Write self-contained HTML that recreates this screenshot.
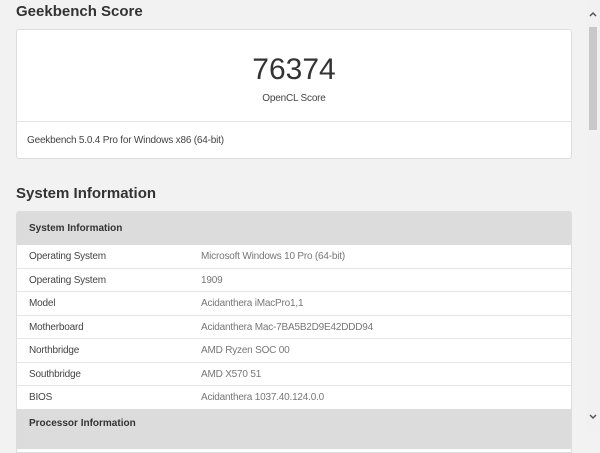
<!DOCTYPE html><html><head><style>
body{margin:0;width:600px;height:432px;overflow:hidden;background:#f2f2f2;font-family:"Liberation Sans",sans-serif;position:relative;color:#333}
.a{position:absolute}
h2{position:absolute;margin:0;font-size:15px;font-weight:bold;color:#333}
.card{position:absolute;left:16px;width:554px;background:#fff;border:1px solid #ddd;border-radius:3px}
.row{position:absolute;left:0;width:554px;height:23px;border-top:1px solid #e6e6e6;font-size:10px;line-height:23px;letter-spacing:-0.2px}
.row span{position:absolute;left:12px;color:#444}
.row b{position:absolute;left:184px;font-weight:normal;color:#777}
.hd{position:absolute;left:0;width:554px;background:#dcdcdc;font-size:10px;font-weight:bold;color:#333}
</style></head><body>
<h2 style="left:16px;top:3px">Geekbench Score</h2>
<div class="card" style="top:29px;height:128px">
<div class="a" style="left:0;width:554px;top:23px;text-align:center;font-size:30px;color:#333">76374</div>
<div class="a" style="left:0;width:554px;top:63px;text-align:center;font-size:10px;color:#444;letter-spacing:-0.2px">OpenCL Score</div>
<div class="a" style="left:0;width:554px;top:91px;border-top:1px solid #e3e3e3"></div>
<div class="a" style="left:10px;top:105px;font-size:10px;color:#444;letter-spacing:-0.2px">Geekbench 5.0.4 Pro for Windows x86 (64-bit)</div>
</div>
<h2 style="left:16px;top:185px">System Information</h2>
<div class="card" style="top:211px;height:240px;border-radius:3px 3px 0 0">
<div class="hd" style="top:0;height:33px;line-height:33px"><span style="padding-left:12px">System Information</span></div>
<div class="row" style="top:33px;border-top:none"><span>Operating System</span><b>Microsoft Windows 10 Pro (64-bit)</b></div>
<div class="row" style="top:56px"><span>Operating System</span><b>1909</b></div>
<div class="row" style="top:79px"><span>Model</span><b>Acidanthera iMacPro1,1</b></div>
<div class="row" style="top:103px"><span>Motherboard</span><b>Acidanthera Mac-7BA5B2D9E42DDD94</b></div>
<div class="row" style="top:126px"><span>Northbridge</span><b>AMD Ryzen SOC 00</b></div>
<div class="row" style="top:150px"><span>Southbridge</span><b>AMD X570 51</b></div>
<div class="row" style="top:173px"><span>BIOS</span><b>Acidanthera 1037.40.124.0.0</b></div>
<div class="hd" style="top:197px;height:40px;line-height:30px"><span style="padding-left:12px">Processor Information</span></div>
</div>
<div class="a" style="left:586px;top:0;width:14px;height:432px;background:#f1f1f1"></div>
<div class="a" style="left:589px;top:27px;width:8px;height:103px;background:#c8c8c8"></div>
<svg class="a" style="left:589px;top:11px" width="8" height="6"><path d="M1 5L4 2L7 5" stroke="#555" stroke-width="1.5" fill="none"/></svg>
<svg class="a" style="left:589px;top:414px" width="8" height="6"><path d="M1 1L4 4L7 1" stroke="#555" stroke-width="1.5" fill="none"/></svg>
</body></html>
